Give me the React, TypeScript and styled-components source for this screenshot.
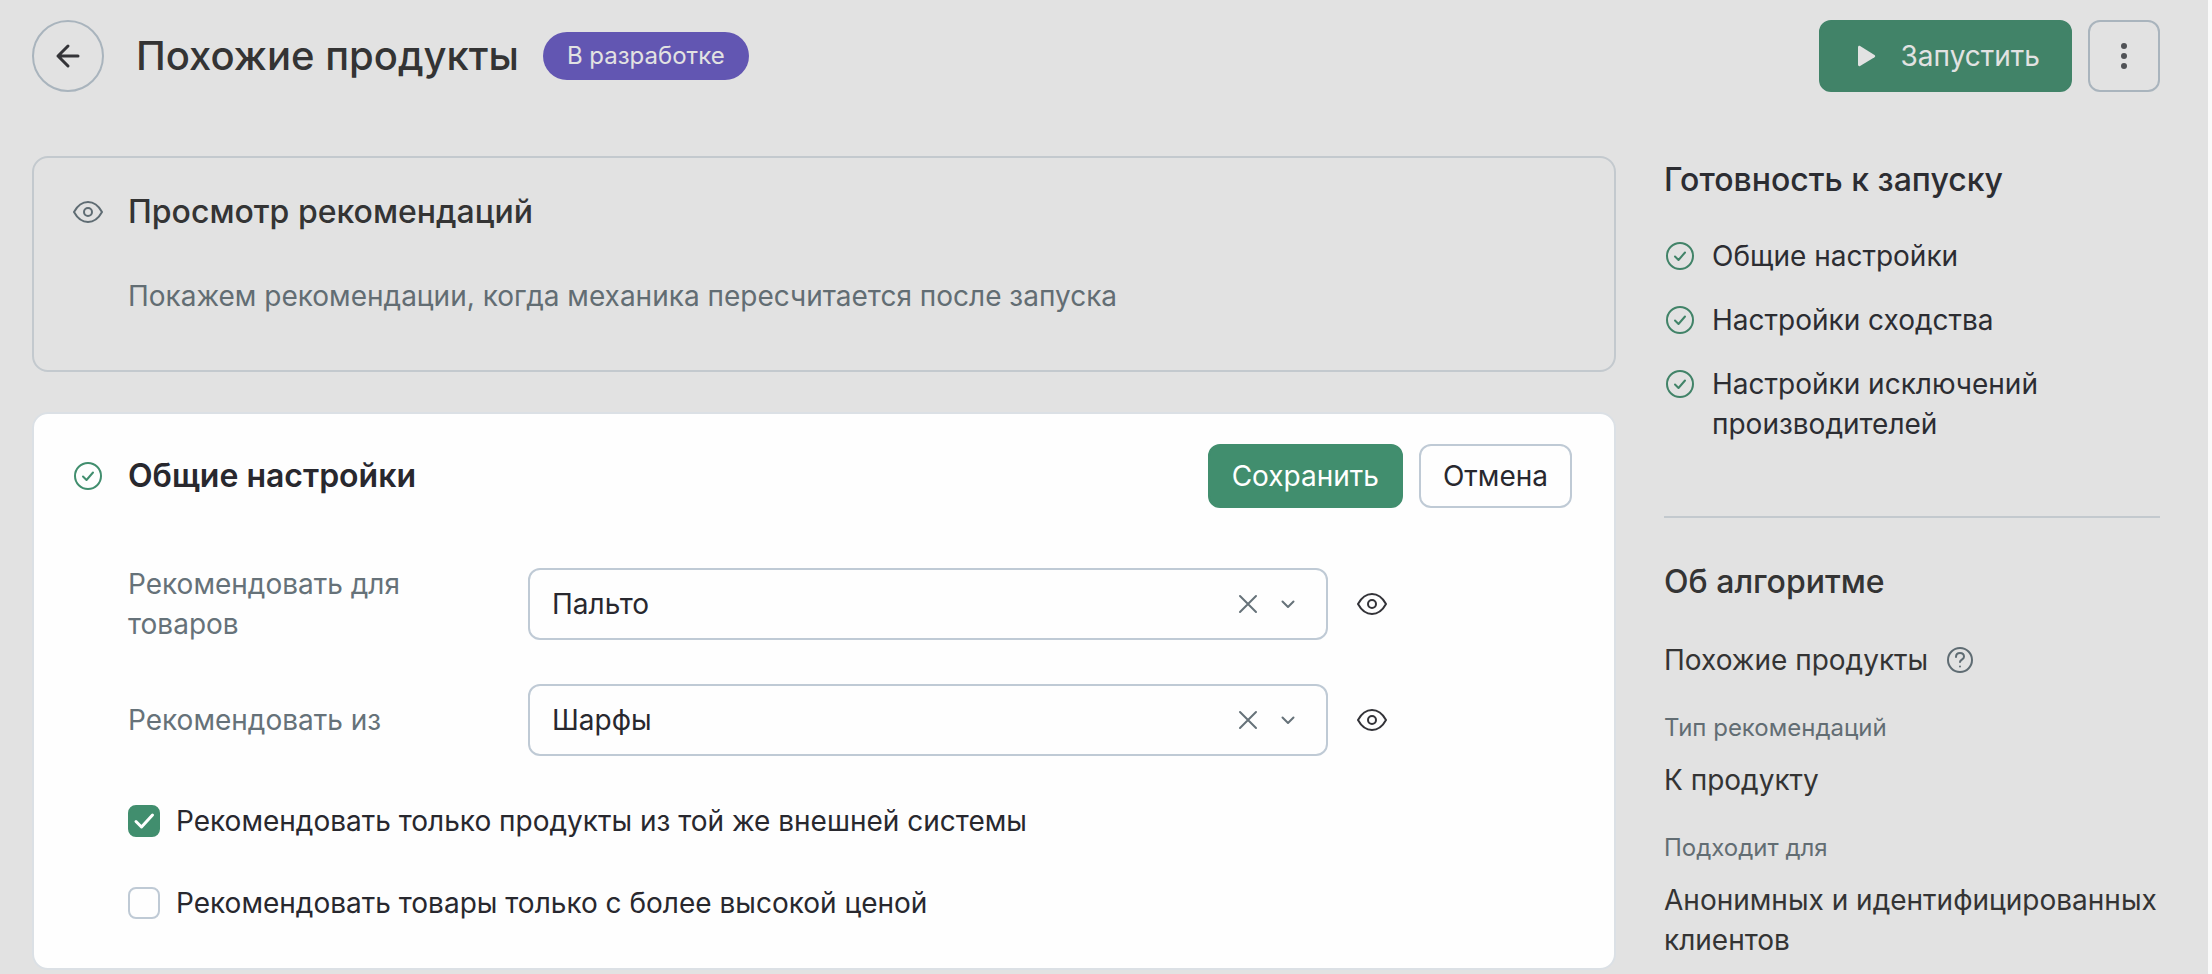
import React, { useState } from "react";
import styled, { createGlobalStyle, css } from "styled-components";

const color = {
  page: "#e2e2e2",
  edge: "#fafafa",
  surface: "#fefefe",
  text: "#28282e",
  textDim: "#2c2d32",
  heading: "#343434",
  muted: "#667279",
  mutedDim: "#626d73",
  green: "#418e6e",
  greenDim: "#418368",
  badge: "#6256b2",
  onDim: "#e2e2e2",
  border: "#bfcad5",
  borderDim: "#a9b4bd",
  line: "#c3c9ce",
  cardEdge: "#dbe0e5",
};

const GlobalStyle = createGlobalStyle`
  *, *::before, *::after { box-sizing: border-box; }
  body {
    margin: 0;
    background: ${color.page};
    color: ${color.text};
    font-family: Inter, "Liberation Sans", sans-serif;
    font-size: 28px;
    line-height: 40px;
  }
  button, select, input { font: inherit; color: inherit; margin: 0; }
  h1, h2, p, ul, dl, dd { margin: 0; padding: 0; }
  svg { display: block; flex: none; }
`;

const Page = styled.div`
  min-height: 100vh;
  padding: 20px 48px 4px 32px;
  border-right: 4px solid ${color.edge};
`;

const Header = styled.header`
  display: flex;
  align-items: center;
  justify-content: space-between;
  margin-bottom: 64px;
`;

const HeaderSide = styled.div<{ $gap: number }>`
  display: flex;
  align-items: center;
  gap: ${(p) => p.$gap}px;
`;

const Title = styled.h1`
  font-size: 40px;
  line-height: 48px;
  font-weight: 500;
  color: ${color.heading};
  margin-left: 8px;
`;

const Badge = styled.span`
  padding: 0 24px;
  border-radius: 24px;
  background: ${color.badge};
  color: ${color.onDim};
  font-size: 24px;
  line-height: 48px;
`;

const SquareButton = styled.button<{ $round?: boolean }>`
  display: grid;
  place-items: center;
  width: 72px;
  height: 72px;
  padding: 0;
  border: 2px solid ${color.borderDim};
  border-radius: ${(p) => (p.$round ? "50%" : "12px")};
  background: transparent;
  color: ${(p) => (p.$round ? "#343438" : "#505256")};
  cursor: pointer;
`;

const Button = styled.button<{ $kind: "launch" | "primary" | "plain" }>`
  display: flex;
  align-items: center;
  height: 64px;
  padding: 0 22px;
  border: 2px solid transparent;
  border-radius: 12px;
  cursor: pointer;
  ${(p) =>
    p.$kind === "launch" &&
    css`
      height: 72px;
      gap: 18px;
      padding: 0 30px;
      background: ${color.greenDim};
      border-color: ${color.greenDim};
      color: ${color.onDim};
    `}
  ${(p) =>
    p.$kind === "primary" &&
    css`
      background: ${color.green};
      border-color: ${color.green};
      color: #fff;
    `}
  ${(p) =>
    p.$kind === "plain" &&
    css`
      background: ${color.surface};
      border-color: ${color.border};
    `}
`;

const Columns = styled.div`
  display: grid;
  grid-template-columns: minmax(0, 1fr) 496px;
  gap: 48px;
  align-items: start;
`;

const Main = styled.main`
  display: flex;
  flex-direction: column;
  gap: 40px;
`;

const Card = styled.section<{ $active?: boolean }>`
  border: 2px solid ${(p) => (p.$active ? color.cardEdge : color.line)};
  border-radius: 16px;
  background: ${(p) => (p.$active ? color.surface : "transparent")};
  padding: ${(p) => (p.$active ? "30px 42px 45px 38px" : "34px 42px 54px 38px")};
`;

const CardHead = styled.div`
  display: flex;
  align-items: center;
  gap: 24px;
`;

const CardTitle = styled.h2<{ $active?: boolean }>`
  flex: 1;
  font-size: 32px;
  line-height: 40px;
  font-weight: ${(p) => (p.$active ? 600 : 500)};
  color: ${(p) => (p.$active ? color.text : color.heading)};
`;

const Actions = styled.div`
  display: flex;
  gap: 16px;
`;

const CardBody = styled.div<{ $top: number }>`
  padding-left: 56px;
  padding-top: ${(p) => p.$top}px;
`;

const Hint = styled.p`
  color: ${color.mutedDim};
`;

const Form = styled.form`
  display: flex;
  flex-direction: column;
  gap: 45px;
`;

const FieldRow = styled.div`
  display: grid;
  grid-template-columns: 400px minmax(0, 800px) 60px;
  align-items: center;
`;

const Rows = styled.div`
  display: flex;
  flex-direction: column;
  gap: 40px;
`;

const FieldLabel = styled.label`
  padding-right: 40px;
  color: ${color.muted};
`;

const SelectBox = styled.div`
  display: flex;
  align-items: center;
  height: 72px;
  padding-right: 18px;
  border: 2px solid ${color.border};
  border-radius: 12px;
  background: ${color.surface};
`;

const Select = styled.select`
  flex: 1;
  min-width: 0;
  height: 100%;
  padding: 0 22px;
  border: 0;
  outline: 0;
  background: transparent;
  appearance: none;
  cursor: pointer;
`;

const IconButton = styled.button`
  display: grid;
  place-items: center;
  width: 40px;
  height: 40px;
  padding: 0;
  border: 0;
  background: transparent;
  color: ${color.muted};
  cursor: pointer;
`;

const PreviewButton = styled(IconButton)`
  justify-self: end;
  width: 32px;
  color: #333338;
`;

const ChevronSlot = styled.span`
  display: grid;
  place-items: center;
  width: 40px;
  color: ${color.muted};
`;

const Checks = styled.div`
  display: flex;
  flex-direction: column;
  gap: 42px;
`;

const CheckLabel = styled.label`
  display: flex;
  align-items: center;
  gap: 16px;
  align-self: flex-start;
  cursor: pointer;
`;

const CheckMark = styled.span`
  display: grid;
  > * {
    grid-area: 1 / 1;
  }
  > svg {
    pointer-events: none;
  }
`;

const CheckInput = styled.input`
  appearance: none;
  width: 32px;
  height: 32px;
  border: 2px solid ${color.border};
  border-radius: 8px;
  background: ${color.surface};
  &:checked {
    background: ${color.green};
    border-color: ${color.green};
  }
`;

const Aside = styled.aside`
  padding-top: 4px;
`;

const AsideTitle = styled.h2<{ $dark?: boolean }>`
  font-size: 32px;
  line-height: 40px;
  font-weight: 500;
  color: ${(p) => (p.$dark ? color.heading : color.textDim)};
`;

const ReadyList = styled.ul`
  list-style: none;
  display: flex;
  flex-direction: column;
  gap: 24px;
  && {
    padding: 36px 0 72px;
  }
  color: ${color.textDim};
`;

const ReadyItem = styled.li`
  display: grid;
  grid-template-columns: 32px 1fr;
  column-gap: 16px;
  > svg {
    margin-top: 4px;
  }
`;

const About = styled.section`
  border-top: 2px solid ${color.line};
  padding-top: 44px;
  color: ${color.heading};
`;

const AboutName = styled.p`
  display: flex;
  align-items: center;
  gap: 16px;
  && {
    padding-top: 38px;
  }
`;

const Facts = styled.dl`
  dt {
    padding-top: 32px;
    margin-bottom: 16px;
    font-size: 24px;
    line-height: 32px;
    color: ${color.mutedDim};
  }
`;

const HelpButton = styled(IconButton)`
  width: 32px;
  height: 32px;
  color: #5f6c73;
`;

const stroke = {
  fill: "none",
  stroke: "currentColor",
  strokeLinecap: "round" as const,
  strokeLinejoin: "round" as const,
  "aria-hidden": true,
};

const EyeIcon = ({ tint }: { tint?: string }) => (
  <svg width="32" height="32" viewBox="0 0 32 32" {...stroke} strokeWidth="2" color={tint}>
    <path d="M2 16C5.5 9.6 10.300 6 16 6s10.500 3.600 14 10c-3.500 6.400-8.300 10-14 10S5.500 22.400 2 16Z" />
    <circle cx="16" cy="16" r="4" />
  </svg>
);

const CircleCheckIcon = ({ tint }: { tint: string }) => (
  <svg width="32" height="32" viewBox="0 0 32 32" {...stroke} strokeWidth="2" color={tint}>
    <circle cx="16" cy="16" r="13" />
    <path d="M11 16.500l3.500 3.500L21 12.500" />
  </svg>
);

const ArrowLeftIcon = () => (
  <svg width="32" height="32" viewBox="0 0 32 32" {...stroke} strokeWidth="3">
    <path d="M26 16H6M16 6L6 16l10 10" />
  </svg>
);

const PlayIcon = () => (
  <svg width="32" height="32" viewBox="0 0 32 32" fill="currentColor" aria-hidden>
    <path d="M7 7.200c0-1.200 1.100-1.800 2.100-1.200l14.400 8.900c.9.600.9 1.700 0 2.300L9.100 26C8.100 26.600 7 26 7 24.800Z" />
  </svg>
);

const DotsIcon = () => (
  <svg width="32" height="32" viewBox="0 0 32 32" fill="currentColor" aria-hidden>
    <circle cx="16" cy="6" r="3" />
    <circle cx="16" cy="16" r="3" />
    <circle cx="16" cy="26" r="3" />
  </svg>
);

const CloseIcon = () => (
  <svg width="24" height="24" viewBox="0 0 24 24" {...stroke} strokeWidth="2">
    <path d="M4 4l16 16M20 4L4 20" />
  </svg>
);

const ChevronIcon = () => (
  <svg width="24" height="24" viewBox="0 0 24 24" {...stroke} strokeWidth="2">
    <path d="M6.500 9.500L12 15l5.500-5.500" />
  </svg>
);

const HelpIcon = () => (
  <svg width="32" height="32" viewBox="0 0 32 32" {...stroke} strokeWidth="2">
    <circle cx="16" cy="16" r="12" />
    <path d="M12 13c0-2.400 1.700-4 4-4s4 1.500 4 3.700c0 2.700-4 3-4 5.300" />
    <circle cx="16" cy="22.500" r="1" fill="currentColor" stroke="none" />
  </svg>
);

type SelectFieldProps = {
  id: string;
  label: string;
  options: string[];
};

function SelectField({ id, label, options }: SelectFieldProps) {
  const [value, setValue] = useState(options[0]);
  return (
    <FieldRow>
      <FieldLabel htmlFor={id}>{label}</FieldLabel>
      <SelectBox>
        <Select id={id} value={value} onChange={(e) => setValue(e.target.value)}>
          <option value="" hidden />
          {options.map((o) => (
            <option key={o}>{o}</option>
          ))}
        </Select>
        <IconButton type="button" aria-label="Очистить" onClick={() => setValue("")}>
          <CloseIcon />
        </IconButton>
        <ChevronSlot>
          <ChevronIcon />
        </ChevronSlot>
      </SelectBox>
      <PreviewButton type="button" aria-label="Посмотреть">
        <EyeIcon />
      </PreviewButton>
    </FieldRow>
  );
}

function CheckField({ label, initial }: { label: string; initial: boolean }) {
  const [checked, setChecked] = useState(initial);
  return (
    <CheckLabel>
      <CheckMark>
        <CheckInput
          type="checkbox"
          checked={checked}
          onChange={(e) => setChecked(e.target.checked)}
        />
        {checked && (
          <svg width="32" height="32" viewBox="0 0 32 32" {...stroke} stroke="#fff" strokeWidth="3">
            <path d="M8 16.500l5.500 5.500L24.500 10" />
          </svg>
        )}
      </CheckMark>
      {label}
    </CheckLabel>
  );
}

const readiness = ["Общие настройки", "Настройки сходства", "Настройки исключений производителей"];

export default function App() {
  return (
    <>
      <GlobalStyle />
      <Page>
        <Header>
          <HeaderSide $gap={24}>
            <SquareButton $round type="button" aria-label="Назад">
              <ArrowLeftIcon />
            </SquareButton>
            <Title>Похожие продукты</Title>
            <Badge>В разработке</Badge>
          </HeaderSide>
          <HeaderSide $gap={16}>
            <Button $kind="launch" type="button">
              <PlayIcon />
              Запустить
            </Button>
            <SquareButton type="button" aria-label="Ещё">
              <DotsIcon />
            </SquareButton>
          </HeaderSide>
        </Header>

        <Columns>
          <Main>
            <Card>
              <CardHead>
                <EyeIcon tint="#5f6c73" />
                <CardTitle>Просмотр рекомендаций</CardTitle>
              </CardHead>
              <CardBody $top={44}>
                <Hint>Покажем рекомендации, когда механика пересчитается после запуска</Hint>
              </CardBody>
            </Card>

            <Card $active>
              <CardHead>
                <CircleCheckIcon tint={color.green} />
                <CardTitle $active>Общие настройки</CardTitle>
                <Actions>
                  <Button $kind="primary" type="submit" form="general-settings">
                    Сохранить
                  </Button>
                  <Button $kind="plain" type="button">
                    Отмена
                  </Button>
                </Actions>
              </CardHead>
              <CardBody $top={56}>
                <Form id="general-settings" onSubmit={(e) => e.preventDefault()}>
                  <Rows>
                    <SelectField
                      id="target"
                      label="Рекомендовать для товаров"
                      options={["Пальто", "Шарфы"]}
                    />
                    <SelectField
                      id="source"
                      label="Рекомендовать из"
                      options={["Шарфы", "Пальто"]}
                    />
                  </Rows>
                  <Checks>
                    <CheckField
                      label="Рекомендовать только продукты из той же внешней системы"
                      initial
                    />
                    <CheckField label="Рекомендовать товары только с более высокой ценой" initial={false} />
                  </Checks>
                </Form>
              </CardBody>
            </Card>
          </Main>

          <Aside>
            <AsideTitle>Готовность к запуску</AsideTitle>
            <ReadyList>
              {readiness.map((item) => (
                <ReadyItem key={item}>
                  <CircleCheckIcon tint={color.greenDim} />
                  {item}
                </ReadyItem>
              ))}
            </ReadyList>
            <About>
              <AsideTitle $dark>Об алгоритме</AsideTitle>
              <AboutName>
                Похожие продукты
                <HelpButton type="button" aria-label="Справка">
                  <HelpIcon />
                </HelpButton>
              </AboutName>
              <Facts>
                <dt>Тип рекомендаций</dt>
                <dd>К продукту</dd>
                <dt>Подходит для</dt>
                <dd>Анонимных и идентифицированных клиентов</dd>
              </Facts>
            </About>
          </Aside>
        </Columns>
      </Page>
    </>
  );
}
